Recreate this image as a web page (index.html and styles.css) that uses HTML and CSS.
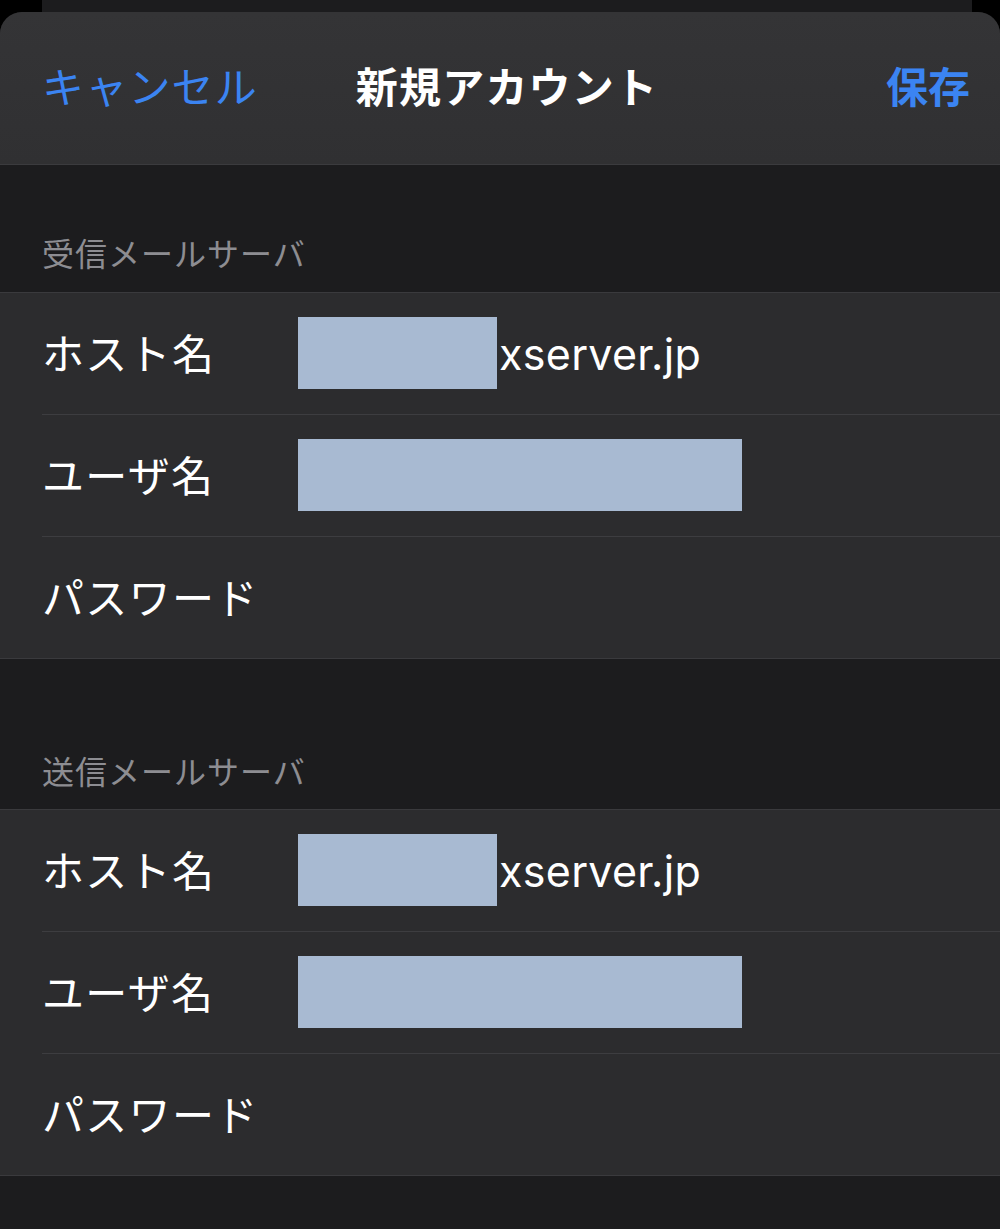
FILE: index.html
```html
<!DOCTYPE html>
<html lang="ja">
<head>
<meta charset="utf-8">
<title>新規アカウント</title>
<link rel="stylesheet" href="styles.css">
</head>
<body>
<div class="backcard"></div>
<div class="sheet">
  <header class="navbar">
    <span class="nav-btn cancel">キャンセル</span>
    <span class="nav-title">新規アカウント</span>
    <span class="nav-btn save">保存</span>
  </header>

  <div class="section-head first">受信メールサーバ</div>
  <div class="group">
    <div class="row">
      <span class="label">ホスト名</span>
      <span class="value"><span class="redact short"></span><span class="vtext">xserver.jp</span></span>
    </div>
    <div class="row">
      <span class="label">ユーザ名</span>
      <span class="value"><span class="redact long"></span></span>
    </div>
    <div class="row">
      <span class="label">パスワード</span>
      <span class="value"></span>
    </div>
  </div>

  <div class="section-head second">送信メールサーバ</div>
  <div class="group">
    <div class="row">
      <span class="label">ホスト名</span>
      <span class="value"><span class="redact short"></span><span class="vtext">xserver.jp</span></span>
    </div>
    <div class="row">
      <span class="label">ユーザ名</span>
      <span class="value"><span class="redact long"></span></span>
    </div>
    <div class="row">
      <span class="label">パスワード</span>
      <span class="value"></span>
    </div>
  </div>
  <div class="bottom-space"></div>
</div>
</body>
</html>
```

FILE: styles.css
```css
html, body {
  margin: 0;
  padding: 0;
  background: #000;
}
body {
  font-family: "Inter", "Noto Sans CJK JP", sans-serif;
  color: #fff;
  height: 1229px;
  overflow: hidden;
}
.backcard {
  height: 12px;
  margin: 0 28px 0 42px;
  background: #1c1c1e;
}
.sheet {
  background: #1c1c1e;
  border-radius: 22px 22px 0 0;
  overflow: hidden;
  height: 1217px;
}
.navbar {
  height: 153px;
  box-sizing: border-box;
  background: linear-gradient(#343436, #303032);
  border-bottom: 1px solid #3b3b3e;
  display: grid;
  grid-template-columns: 1fr auto 1fr;
  align-items: center;
  padding: 0 30px 0 42px;
}
.nav-btn {
  font-size: 42px;
  color: #3b84f2;
  line-height: 1;
}
.cancel {
  justify-self: start;
  font-weight: 400;
  letter-spacing: 1.2px;
}
.save {
  justify-self: end;
  font-weight: 700;
}
.nav-title {
  font-size: 42px;
  font-weight: 700;
  line-height: 1;
  letter-spacing: 1.2px;
  padding-left: 2px;
}
.section-head {
  font-family: "Noto Sans CJK JP", sans-serif;
  font-size: 32px;
  letter-spacing: 1px;
  color: #8d8d92;
  padding: 0 0 0 42px;
  display: flex;
  align-items: flex-end;
  box-sizing: border-box;
  line-height: 1;
}
.section-head.first {
  height: 127px;
  padding-bottom: 24px;
}
.section-head.second {
  height: 150px;
  padding-bottom: 23px;
}
.group {
  background: #2c2c2e;
  border-top: 1px solid #3a3a3d;
  border-bottom: 1px solid #3a3a3d;
}
.row {
  height: 122px;
  box-sizing: border-box;
  margin-left: 42px;
  display: grid;
  grid-template-columns: 256px 1fr;
  align-items: center;
  border-bottom: 1px solid #3d3d40;
}
.row:last-child {
  border-bottom: none;
  height: 121px;
}
.label {
  font-family: "Noto Sans CJK JP", sans-serif;
  font-size: 42px;
  font-weight: 400;
  letter-spacing: 1.3px;
  line-height: 1;
  padding-bottom: 4px;
}
.value {
  display: flex;
  align-items: center;
  height: 72px;
  margin-top: -2px;
}
.redact {
  display: block;
  height: 72px;
  background: #a8bad2;
}
.redact.short { width: 199px; }
.redact.long { width: 444px; }
.vtext {
  font-family: "Inter", sans-serif;
  font-size: 43px;
  letter-spacing: 0.3px;
  margin-left: 2px;
  line-height: 1;
  padding-top: 4px;
}
.bottom-space {
  height: 60px;
}
```
